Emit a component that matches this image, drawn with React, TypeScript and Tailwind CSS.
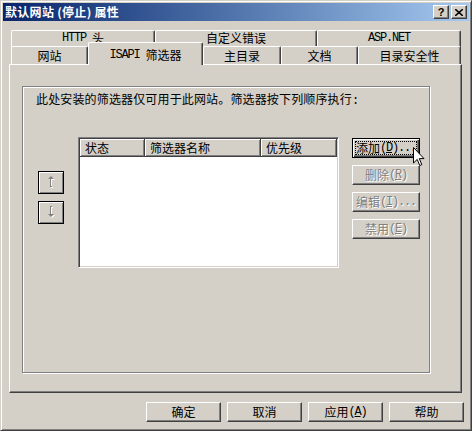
import React from "react";

const F = "font-['Noto_Sans_CJK_SC','Noto_Sans',sans-serif]";

function L({ children }: { children: React.ReactNode }) {
  return <span className="font-['Liberation_Mono',monospace] tracking-[-1.2px]">{children}</span>;
}

function Tab({ w, label, top = false }: { w: number; label: React.ReactNode; top?: boolean }) {
  return (
    <div
      style={{ width: w }}
      className={`${top ? "h-[18px] pb-[3px]" : "h-[18px] mt-[4px]"} shrink-0 bg-[#d4d0c8] border-l border-t border-white border-r border-r-[#404040] rounded-t-[2px] shadow-[inset_-1px_0_#808080] flex items-center justify-center text-[12px] leading-none text-black whitespace-pre`}
    >
      {label}
    </div>
  );
}

function UpDownIcon({ down = false }: { down?: boolean }) {
  const shape = down
    ? "M3 0 H5 V1 H4 V8 H7 L4 11 L1 8 H3 Z"
    : "M4 0 L7 3 H4 V10 H5 V11 H3 V3 H1 Z";
  return (
    <svg width="9" height="13" viewBox="0 0 9 13">
      <path d={shape} transform="translate(1 1)" fill="#ffffff" />
      <path d={shape} fill="#808080" />
    </svg>
  );
}

function SideButton({ label, k, tail = "", primary = false }: { label: string; k: string; tail?: string; primary?: boolean }) {
  if (primary) {
    return (
      <div className="w-[68px] h-[20px] border border-black bg-[#d4d0c8] shadow-[inset_1px_1px_#fff,inset_-1px_-1px_#404040,inset_-2px_-2px_#808080] p-[2px]">
        <div className="w-full h-full border border-dotted border-black flex items-center justify-center text-[12px] leading-none text-black whitespace-nowrap">
          {label}<L>(<span className="underline">{k}</span>){tail}</L>
        </div>
      </div>
    );
  }
  return (
    <div className="w-[68px] h-[20px] bg-[#d4d0c8] border border-t-white border-l-white border-r-[#404040] border-b-[#404040] shadow-[inset_-1px_-1px_#808080] flex items-center justify-center text-[12px] leading-none text-[#808080] [text-shadow:1px_1px_0_#fff] whitespace-nowrap">
      {label}<L>(<span className="underline">{k}</span>){tail}</L>
    </div>
  );
}

function BottomButton({ children }: { children: React.ReactNode }) {
  return (
    <div className="w-[75px] h-[20px] bg-[#d4d0c8] border border-t-white border-l-white border-r-[#404040] border-b-[#404040] shadow-[inset_-1px_-1px_#808080] flex items-center justify-center text-[12px] leading-none text-black whitespace-nowrap">
      {children}
    </div>
  );
}

function HeaderCell({ w, label }: { w: number; label: string }) {
  return (
    <div
      style={{ width: w }}
      className="h-[18px] shrink-0 bg-[#d4d0c8] border-r border-b border-r-[#404040] border-b-[#404040] shadow-[inset_1px_1px_#fff,inset_-1px_-1px_#808080] flex items-center pl-[5px] text-[12px] leading-none text-black"
    >
      {label}
    </div>
  );
}

export default function App() {
  return (
    <div className={`${F} relative w-[472px] h-[431px] bg-[#d4d0c8] border border-t-[#d4d0c8] border-l-[#d4d0c8] border-r-[#404040] border-b-[#404040] shadow-[inset_1px_1px_#fff,inset_-1px_-1px_#808080] p-[2px] flex flex-col overflow-hidden`}>
      {/* Title bar */}
      <div className="h-[18px] shrink-0 bg-linear-to-r from-[#0a246a] to-[#a6caf0] flex items-center justify-between pl-[2px] pr-[2px]">
        <span className="text-white font-bold text-[12px] leading-none tracking-[0.3px]">默认网站 (停止) 属性</span>
        <div className="flex gap-[2px]">
          <div className="w-[16px] h-[14px] bg-[#d4d0c8] border border-t-white border-l-white border-r-[#404040] border-b-[#404040] shadow-[inset_-1px_-1px_#808080] flex items-center justify-center text-[11px] font-bold leading-none text-black font-['Liberation_Sans',sans-serif]">?</div>
          <div className="w-[16px] h-[14px] bg-[#d4d0c8] border border-t-white border-l-white border-r-[#404040] border-b-[#404040] shadow-[inset_-1px_-1px_#808080] flex items-center justify-center">
            <svg width="8" height="7" viewBox="0 0 8 7">
              <path d="M0 0 L8 7 M8 0 L0 7" stroke="#000" strokeWidth="1.6" />
            </svg>
          </div>
        </div>
      </div>

      {/* Tabs + panel */}
      <div className="ml-[6px] w-[453px] mt-[9px] flex flex-col">
        <div className="flex pl-[2px] h-[18px]">
          <Tab w={144} label={<><L>HTTP </L>头</>} top />
          <Tab w={162} label="自定义错误" top />
          <Tab w={144} label={<L>ASP.NET</L>} top />
        </div>
        <div className="flex items-start pl-[2px] h-[22px] -mt-[6px]">
          <Tab w={77} label="网站" />
          <div className="relative z-10 w-[115px] h-[23px] shrink-0 bg-[#d4d0c8] border-l border-t border-white border-r border-r-[#404040] rounded-t-[2px] shadow-[inset_-1px_0_#808080] flex items-center justify-center pt-[1px] text-[12px] leading-none text-black whitespace-pre">
            <L>ISAPI </L>筛选器
          </div>
          <Tab w={78} label="主目录" />
          <Tab w={77} label="文档" />
          <Tab w={103} label="目录安全性" />
        </div>

        {/* Panel */}
        <div className="h-[329px] bg-[#d4d0c8] border border-t-white border-l-white border-r-[#404040] border-b-[#404040] shadow-[inset_-1px_-1px_#808080] pl-[12px] pt-[21px]">
          <div className="w-[408px] h-[287px] border border-[#808080] shadow-[inset_1px_1px_#fff,1px_1px_#fff] flex flex-col">
            <div className="pl-[13px] pt-[5px] h-[19px] text-[12px] leading-[14px] tracking-[0.15px] text-black">
              此处安装的筛选器仅可用于此网站。筛选器按下列顺序执行<L>:</L>
            </div>
            <div className="flex mt-[31px] pl-[15px]">
              <div className="w-[26px] pt-[34px] flex flex-col gap-[7px]">
                <div className="w-[26px] h-[23px] bg-[#d4d0c8] border border-black shadow-[inset_1px_1px_#fff,inset_-1px_-1px_#808080] flex items-center justify-center">
                  <UpDownIcon />
                </div>
                <div className="w-[26px] h-[23px] bg-[#d4d0c8] border border-black shadow-[inset_1px_1px_#fff,inset_-1px_-1px_#808080] flex items-center justify-center">
                  <UpDownIcon down />
                </div>
              </div>
              <div className="ml-[14px] w-[261px] h-[131px] bg-white border border-t-[#808080] border-l-[#808080] border-r-white border-b-white shadow-[inset_1px_1px_#404040,inset_-1px_-1px_#d4d0c8] p-[1px]">
                <div className="flex">
                  <HeaderCell w={65} label="状态" />
                  <HeaderCell w={116} label="筛选器名称" />
                  <HeaderCell w={76} label="优先级" />
                </div>
              </div>
              <div className="ml-[13px] pt-[1px] flex flex-col gap-[7px]">
                <SideButton label="添加" k="D" tail="..." primary />
                <SideButton label="删除" k="R" />
                <SideButton label="编辑" k="I" tail="..." />
                <SideButton label="禁用" k="E" />
              </div>
            </div>
          </div>
        </div>
      </div>

      {/* Bottom buttons */}
      <div className="flex justify-end gap-[6px] pr-[5px] mt-[9px]">
        <BottomButton>确定</BottomButton>
        <BottomButton>取消</BottomButton>
        <BottomButton>
          应用<L>(<span className="underline">A</span>)</L>
        </BottomButton>
        <BottomButton>帮助</BottomButton>
      </div>

      {/* Mouse cursor */}
      <svg className="absolute left-[412px] top-[146px] pointer-events-none" width="12" height="20" viewBox="0 0 12 20">
        <path d="M0.5 0.5 L0.5 16 L4.2 12.4 L6.8 18.5 L8.8 17.6 L6.3 11.6 L11 11.6 Z" fill="#fff" stroke="#000" strokeWidth="1" />
      </svg>
    </div>
  );
}
